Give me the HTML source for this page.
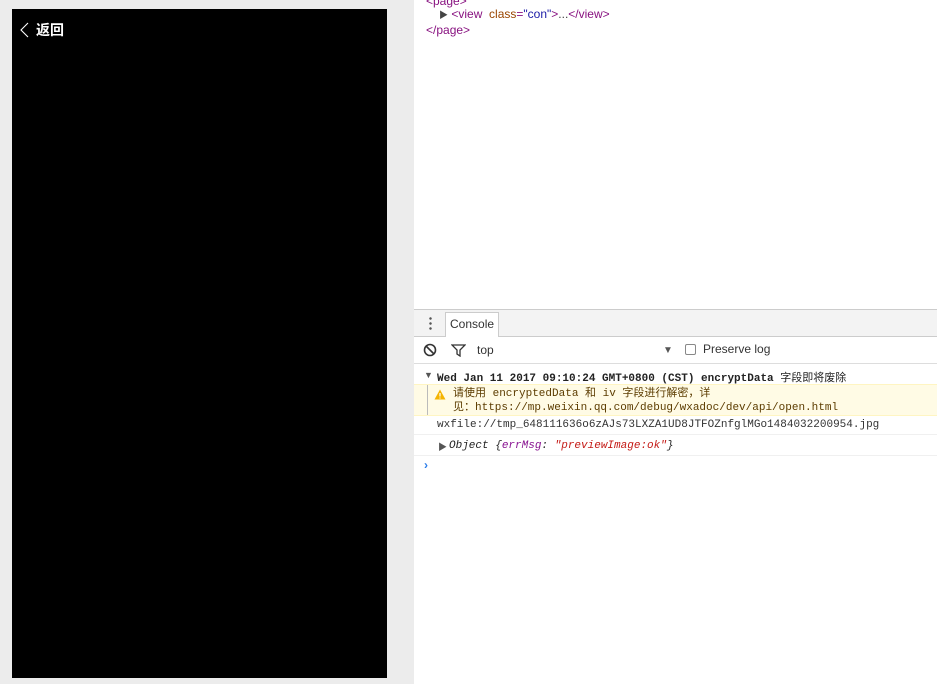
<!DOCTYPE html>
<html><head><meta charset="utf-8"><style>
*{margin:0;padding:0;box-sizing:border-box}
body{width:937px;height:684px;overflow:hidden;background:#fff;position:relative;font-family:"Liberation Sans","Noto Sans CJK SC",sans-serif}
.abs{position:absolute;white-space:nowrap}
.mono{font-family:"Liberation Mono","Noto Sans CJK SC",monospace;font-size:11px}
</style></head><body>
<div class="abs" style="left:0;top:0;width:414px;height:684px;background:#ececec"></div>
<div class="abs" style="left:12px;top:9px;width:375px;height:669px;background:#000"></div>
<svg class="abs" style="left:19px;top:21px" width="11" height="18"><path d="M9 2 L2 9 L9 16" stroke="#fff" stroke-width="1.1" fill="none"/></svg>
<div class="abs" style="left:36px;top:20px;color:#fff;font-size:14px;font-weight:bold;font-family:'Noto Sans CJK SC',sans-serif">返回</div>

<div class="abs" style="left:426px;top:-6px;font-size:12px;color:#881280">&lt;page&gt;</div>
<div class="abs" style="left:439px;top:7px;font-size:12px;color:#881280"><span style="color:#444;font-size:9px">▶</span> &lt;view &nbsp;<span style="color:#994500">class</span>=<span style="color:#1a1aa6">"con"</span>&gt;<span style="color:#444">...</span>&lt;/view&gt;</div>
<div class="abs" style="left:426px;top:23px;font-size:12px;color:#881280">&lt;/page&gt;</div>

<div class="abs" style="left:414px;top:309px;width:523px;height:28px;background:#f3f3f3;border-top:1px solid #ccc;border-bottom:1px solid #ccc"></div>
<div class="abs" style="left:429px;top:316px;width:3px;height:14px;background:radial-gradient(circle,#555 1px,transparent 1.5px) 0 0/3px 5px"></div>
<div class="abs" style="left:445px;top:312px;width:54px;height:25px;background:#fff;border:1px solid #ccc;border-bottom:none;font-size:12px;padding:4px 0 0 4px;color:#333">Console</div>
<svg class="abs" style="left:423px;top:343px" width="14" height="14"><circle cx="7" cy="7" r="5.5" stroke="#333" stroke-width="1.6" fill="none"/><path d="M3 3 L11 11" stroke="#333" stroke-width="1.6"/></svg>
<svg class="abs" style="left:451px;top:344px" width="15" height="13"><path d="M1 1 H14 L9 6 V12 L6 10 V6 Z" stroke="#333" stroke-width="1.3" fill="none"/></svg>
<div class="abs" style="left:477px;top:343px;font-size:12px;color:#333">top</div>
<div class="abs" style="left:663px;top:345px;font-size:10px;color:#555">▼</div>
<div class="abs" style="left:685px;top:344px;width:11px;height:11px;border:1px solid #888;border-radius:2px;background:#fff"></div>
<div class="abs" style="left:703px;top:342px;font-size:12px;color:#333">Preserve log</div>
<div class="abs" style="left:414px;top:363px;width:523px;height:1px;background:#ddd"></div>

<div class="abs" style="left:424px;top:370px;font-size:9px;color:#555">▼</div>
<div class="abs mono" style="left:437px;top:369px;font-weight:bold;color:#222">Wed Jan 11 2017 09:10:24 GMT+0800 (CST) encryptData <span style="font-weight:normal">字段即将废除</span></div>
<div class="abs" style="left:414px;top:384px;width:523px;height:32px;background:#fffbe5;border-top:1px solid #fff5c2;border-bottom:1px solid #fff5c2"></div>
<div class="abs" style="left:427px;top:385px;width:1px;height:30px;background:#bbb"></div>
<svg class="abs" style="left:434px;top:389px" width="12" height="11"><path d="M6 0.5 L11.5 10.5 H0.5 Z" fill="#f4b400"/><path d="M6 4 V7.5 M6 8.5 V9.5" stroke="#fff" stroke-width="1.2"/></svg>
<div class="abs mono" style="left:453px;top:387px;color:#5c3c00;line-height:14px">请使用 encryptedData 和 iv 字段进行解密，详<br>见：https://mp.weixin.qq.com/debug/wxadoc/dev/api/open.html</div>
<div class="abs mono" style="left:437px;top:419px;color:#333">wxfile://tmp_648111636o6zAJs73LXZA1UD8JTFOZnfglMGo1484032200954.jpg</div>
<div class="abs" style="left:414px;top:434px;width:523px;height:1px;background:#f0f0f0"></div>
<div class="abs" style="left:438px;top:440px;font-size:9px;color:#555">▶</div>
<div class="abs mono" style="left:449px;top:440px;font-style:italic;color:#222">Object {<span style="color:#881391">errMsg</span>: <span style="color:#c41a16">"previewImage:ok"</span>}</div>
<div class="abs" style="left:414px;top:455px;width:523px;height:1px;background:#f0f0f0"></div>
<div class="abs" style="left:424px;top:458px;font-size:12px;color:#2b7de9;font-weight:bold">›</div>
</body></html>
